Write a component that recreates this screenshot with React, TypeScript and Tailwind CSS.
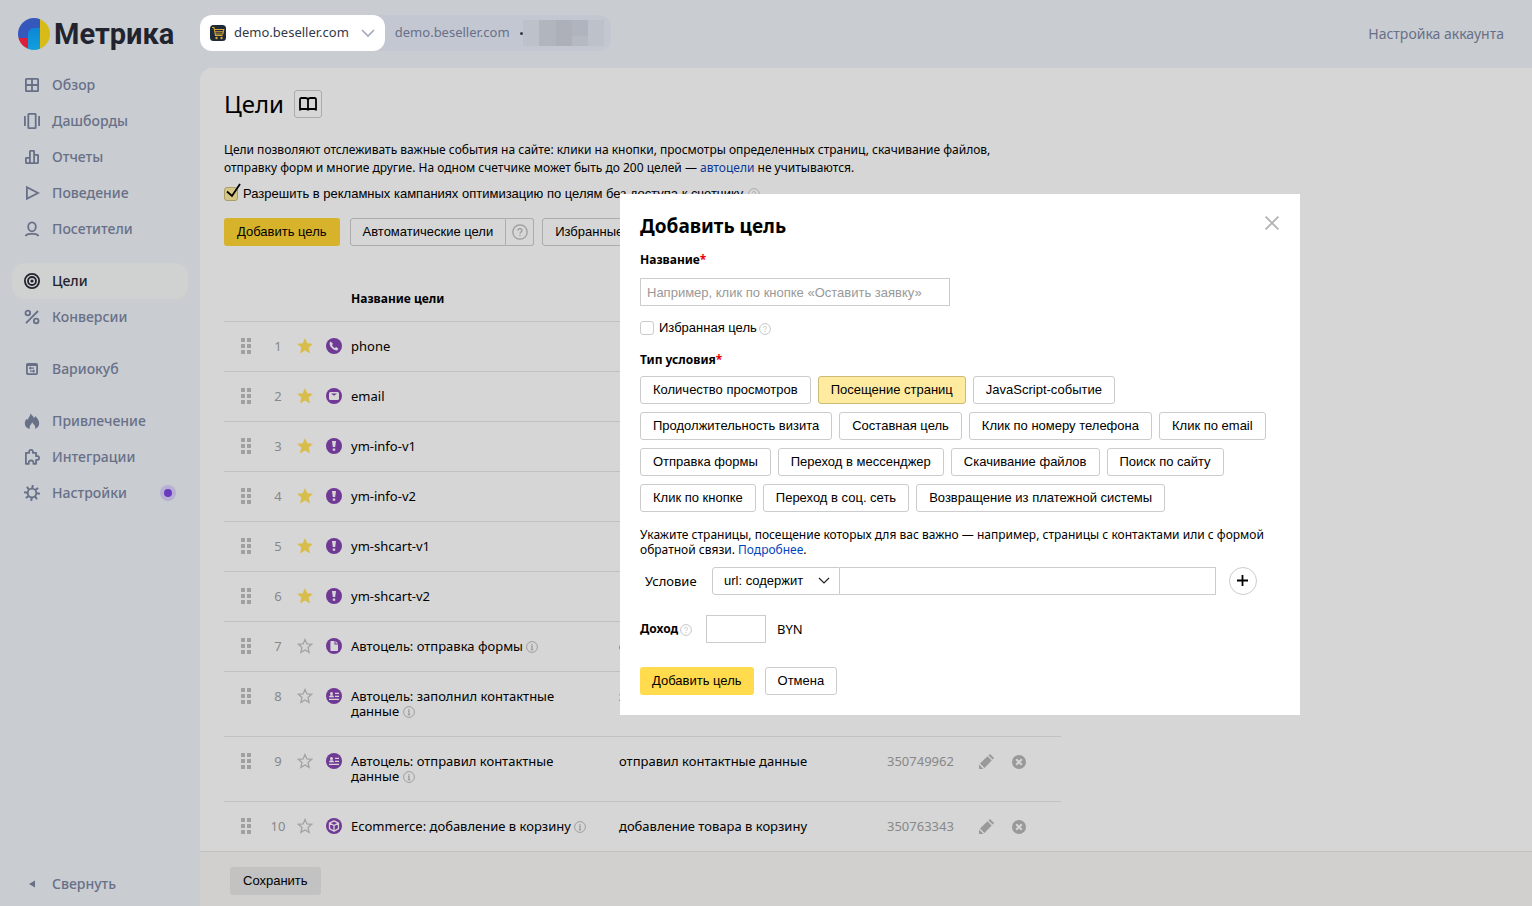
import { useState } from 'react'
import type { ReactNode } from 'react'

type Goal = { id: number; name: string; star: boolean; icon: string; info?: boolean; condition?: string; number?: string }

const GOALS: Goal[] = [
  { id: 1, name: 'phone', star: true, icon: 'phone' },
  { id: 2, name: 'email', star: true, icon: 'mail' },
  { id: 3, name: 'ym-info-v1', star: true, icon: 'event' },
  { id: 4, name: 'ym-info-v2', star: true, icon: 'event' },
  { id: 5, name: 'ym-shcart-v1', star: true, icon: 'event' },
  { id: 6, name: 'ym-shcart-v2', star: true, icon: 'event' },
  { id: 7, name: 'Автоцель: отправка формы', star: false, icon: 'form', info: true, condition: 'отправка формы' },
  { id: 8, name: 'Автоцель: заполнил контактные данные', star: false, icon: 'contact', info: true, condition: 'заполнил контактные данные' },
  { id: 9, name: 'Автоцель: отправил контактные данные', star: false, icon: 'contact', info: true, condition: 'отправил контактные данные', number: '350749962' },
  { id: 10, name: 'Ecommerce: добавление в корзину', star: false, icon: 'cube', info: true, condition: 'добавление товара в корзину', number: '350763343' },
]

const CONDITION_TYPES = [
  'Количество просмотров', 'Посещение страниц', 'JavaScript-событие',
  'Продолжительность визита', 'Составная цель', 'Клик по номеру телефона', 'Клик по email',
  'Отправка формы', 'Переход в мессенджер', 'Скачивание файлов', 'Поиск по сайту',
  'Клик по кнопке', 'Переход в соц. сеть', 'Возвращение из платежной системы',
]

const stroke = { fill: 'none', stroke: 'currentColor', strokeWidth: 1.8 }

const NAV: { label: string; icon: ReactNode; dot?: boolean }[][] = [
  [
    { label: 'Обзор', icon: <path {...stroke} d="M2.500 1.900h11q.6 0 .6.600v11q0 .6-.6.600h-11q-.6 0-.6-.600v-11q0-.6.600-.600zM8 2v12M2 8h12" /> },
    { label: 'Дашборды', icon: <path {...stroke} d="M4.900.900h6.200q.6 0 .6.600v13q0 .6-.6.600H4.900q-.6 0-.6-.600v-13q0-.6.600-.600zM.9 3v10M15.100 3v10" /> },
    { label: 'Отчеты', icon: <path {...stroke} strokeLinejoin="round" d="M5.900 14.100V2.400q0-.5.5-.5h3.200q.5 0 .5.5v11.700M10.100 5.800h3.500q.5 0 .5.5v7.300q0 .5-.5.5H2.400q-.5 0-.5-.5v-4.300q0-.5.5-.5h3.500" /> },
    { label: 'Поведение', icon: <path {...stroke} d="M2.900 2.200v11.600L14 8z" /> },
    { label: 'Посетители', icon: <><ellipse {...stroke} cx="8" cy="5.800" rx="3.800" ry="4.500" /><path {...stroke} d="M1.500 15.200c1-2 2.500-2.300 4.500-2.300h4c2 0 3.500.3 4.500 2.300" /></> },
  ],
  [
    { label: 'Цели', icon: <><circle {...stroke} cx="8" cy="8" r="7.100" /><circle {...stroke} cx="8" cy="8" r="4" /><circle cx="8" cy="8" r="1.600" fill="currentColor" /></> },
    { label: 'Конверсии', icon: <><circle {...stroke} cx="3.800" cy="4" r="2.300" /><circle {...stroke} cx="12.200" cy="12" r="2.300" /><path {...stroke} d="M14 2 2 14.200" /></> },
  ],
  [
    { label: 'Вариокуб', icon: <><rect {...stroke} x="2.900" y="2.900" width="10.200" height="10.200" rx="1" /><path d="M3 3h10v2H3z" fill="currentColor" /><path {...stroke} strokeWidth="1.200" d="M5 7.200h5M6.500 5.800v2.800M11 10.200H6M9.500 8.800v2.800" /></> },
  ],
  [
    { label: 'Привлечение', icon: <path fill="currentColor" d="M6.200 0c.5 1.500 2.500 2.400 3.800 5 .6-.4.900-1 1-2 2.200 1.800 4.200 4.500 4.200 7.300 0 2.700-1.600 4.900-4.200 5.700.5-1.800.3-3.300-1.200-4.600-.7-.6-1.300-1.300-1.400-2.200-.9.900-.9 1.700-1.700 2.600-1.200 1.300-1.300 2.600-.8 4.200C3 15.500.8 13.600.8 10.500c0-1.900.7-3.400 2-4.700.3.600.6.900 1.100 1C4.300 4.300 6.800 3 6.200 0z" /> },
    { label: 'Интеграции', icon: <path {...stroke} strokeLinejoin="round" d="M1.900 3.800h3.300C4.800 1.900 5.500.9 7 .9s2.200 1 1.800 2.900h3.300v3.400c1.900-.4 3 .3 3 1.800s-1.100 2.200-3 1.800v4H9.400c.4-2.200-.5-3.300-2.300-3.300s-2.700 1.100-2.300 3.300H1.900v-4.500z" /> },
    { label: 'Настройки', dot: true, icon: <><circle {...stroke} cx="8" cy="8" r="4.300" /><path {...stroke} strokeWidth="2" d="M8.800.100 8.200 3.500M7.200 15.900l.6-3.400M.1 7.200l3.400.6M15.900 8.800l-3.400-.6M3 1.800l1.900 2.800M13 14.200l-1.900-2.800M1.800 13l2.800-1.900M14.200 3l-2.800 1.900" /></> },
  ],
]

const GOAL_ICONS: Record<string, ReactNode> = {
  phone: <path fill="#d6d6d6" d="M4.700 3.500 3.600 4.900c-.2 3.500 3.700 7.500 7.400 7.500l1.500-1.300-2.200-2-1.500.9C7.700 9.500 6.600 8.400 6.100 7.200l.8-1.400z" />,
  mail: <><rect x="3" y="4" width="10" height="8" rx="1.500" fill="#d6d6d6" /><path d="M5 5.500h6L8 7.800z" fill="#713996" /></>,
  event: <path fill="#d6d6d6" d="M6 3h4l-.8 6H6.800zM6.800 10.500h2.400v2.200H6.800z" />,
  form: <path fill="#d6d6d6" d="M5.200 3h3.300v3.500H12v5.700q0 .8-.8.8h-6q-.8 0-.8-.8V3.800q0-.8.800-.800zM9.500 3 12 5.500H9.500z" />,
  contact: <path fill="#d6d6d6" d="M5.500 4a1.500 1.500 0 1 1 0 3 1.500 1.500 0 0 1 0-3zM3 9.300c0-2.600 5-2.600 5 0zM9 4.800h4v1.300H9zM9 7.800h4v1.300H9zM3 10.800h10v1.300H3z" />,
  cube: <path fill="none" stroke="#d6d6d6" strokeWidth="1.300" strokeLinejoin="round" d="m8 2.800 4.500 2.300v5.500L8 13.200l-4.500-2.600V5.100zM3.500 5.100 8 7.500l4.500-2.400M8 7.500v5.700" />,
}

function GoalIcon({ name }: { name: string }) {
  return (
    <svg width="16" height="16" viewBox="0 0 16 16" className="block">
      <circle cx="8" cy="8" r="8" fill="#713996" />
      {GOAL_ICONS[name]}
    </svg>
  )
}

function Star({ filled }: { filled: boolean }) {
  return (
    <svg width="16" height="16" viewBox="0 0 16 16" className="block">
      <path
        d={filled ? 'M8 0l2.300 5.300 5.700.5-4.300 3.800 1.300 5.900L8 12.400l-5 3.100 1.300-5.900L0 5.800l5.700-.5z' : 'M8 1.500l1.900 4.400 4.700.4L11 9.500l1.100 4.900L8 11.900l-4.100 2.500L5 9.500 1.400 6.300l4.700-.4z'}
        fill={filled ? '#d9bd4c' : 'none'}
        stroke={filled ? 'none' : '#a3a3a3'}
        strokeWidth="1.300"
      />
    </svg>
  )
}

function Mark({ kind, size = 12 }: { kind: 'help' | 'info'; size?: number }) {
  return (
    <svg width={size} height={size} viewBox="0 0 12 12" className="inline-block shrink-0 align-[-2px]" fill="none" stroke="currentColor">
      <circle cx="6" cy="6" r="5.400" strokeWidth=".9" />
      {kind === 'help'
        ? <path strokeWidth=".9" d="M4.500 4.900c0-2 3-2 3 0 0 1-1.500 1.100-1.500 2.200M6 8v1" />
        : <path strokeWidth="1.200" d="M6 3v1.200M5 5.400h1v3M4.800 8.600h2.400" />}
    </svg>
  )
}

function Logo() {
  return (
    <a href="#" className="flex h-[67px] items-center gap-1 pl-[18px] text-[#21242f]">
      <svg width="32" height="32" viewBox="0 0 32 32">
        <defs>
          <clipPath id="logo"><circle cx="16" cy="16" r="16" /></clipPath>
          <linearGradient id="cyan" x1="0" y1="0" x2="0" y2="1">
            <stop offset="0" stopColor="#0c86d6" /><stop offset="1" stopColor="#12a0dc" />
          </linearGradient>
        </defs>
        <g clipPath="url(#logo)">
          <path fill="#3558bd" d="M0 0h22v20H0z" />
          <path fill="#dc1f3c" d="M0 20h10v12H0z" />
          <path fill="url(#cyan)" d="M10 32V17q0-7 7-7h5v22z" />
          <path fill="#d8bb17" d="M22 0h10v32H22z" />
        </g>
      </svg>
      <span className="font-[Roboto,sans-serif] text-[29px] leading-8 font-bold">Метрика</span>
    </a>
  )
}

function Sidebar() {
  return (
    <aside className="flex w-[200px] shrink-0 flex-col text-[14px] font-medium text-[#687088]">
      <Logo />
      <nav className="flex flex-col gap-4 px-3">
        {NAV.map((group, i) => (
          <ul key={i}>
            {group.map(item => (
              <li key={item.label}>
                <a
                  href="#"
                  className={`flex h-9 items-center gap-3 rounded-xl px-3 ${item.label === 'Цели' ? 'bg-[#d0d1d1] text-[#21242f]' : ''}`}
                >
                  <svg width="16" height="16" viewBox="0 0 16 16" className="shrink-0">{item.icon}</svg>
                  <span className="pb-0.5">{item.label}</span>
                  {item.dot && (
                    <span className="ml-auto flex size-4 items-center justify-center rounded-full bg-[#b7b0d2]">
                      <span className="size-2 rounded-full bg-[#683ac0]" />
                    </span>
                  )}
                </a>
              </li>
            ))}
          </ul>
        ))}
      </nav>
      <button className="mx-3 mt-auto mb-1 flex h-9 items-center gap-3 px-3">
        <svg width="16" height="16" viewBox="0 0 16 16"><path d="M11 4.500v7L5 8z" fill="currentColor" /></svg>
        <span className="pb-0.5">Свернуть</span>
      </button>
    </aside>
  )
}

function Header() {
  return (
    <header className="flex h-[68px] shrink-0 items-center justify-between pr-7 pb-0.5 text-[14px] text-[#687088]">
      <div className="flex h-9 items-center rounded-xl bg-[#c3c7d2] text-[13px]">
        <button className="flex h-9 items-center gap-2 rounded-xl bg-white px-2.5 text-[#32394a]">
          <svg width="16" height="16" viewBox="0 0 16 16">
            <rect width="16" height="16" rx="3.500" fill="#1f2a38" />
            <path d="M2 2.500h2l1.500 8h7M4.500 4.500h9.300l-1 4.500H5.300M5 6.700h8" fill="none" stroke="#d9a838" strokeWidth="1.100" />
            <circle cx="6.500" cy="13" r="1.200" fill="#d9a838" />
            <circle cx="11.500" cy="13" r="1.200" fill="#d9a838" />
          </svg>
          <span>demo.beseller.com</span>
          <svg width="14" height="8" viewBox="0 0 14 8" fill="none" stroke="#a3abbd" strokeWidth="1.700" className="ml-1"><path d="m1 1 6 6 6-6" /></svg>
        </button>
        <span className="pl-2.5">demo.beseller.com</span>
        <span className="ml-2.5 size-[3px] rounded-full bg-[#32394a]" />
        <svg width="88" height="26" viewBox="0 0 88 26">
          <path fill="#bdc1ca" d="M0 0h16v26H0zM65 0h16v26H65z" />
          <path fill="#b1b5bd" d="M16 0h17v26H16z" />
          <path fill="#adb0b8" d="M33 0h16v26H33z" />
          <path fill="#afb4be" d="M49 0h16v16H49z" />
          <path fill="#b5b9c2" d="M49 16h16v10H49z" />
        </svg>
      </div>
      <a href="#">Настройка аккаунта</a>
    </header>
  )
}

function GoalsTable() {
  return (
    <table className="mt-[45px] w-full max-w-[837px] table-fixed text-left text-[13px] leading-[15px]">
      <colgroup>
        <col className="w-[44px]" />
        <col className="w-[20px]" />
        <col className="w-[34px]" />
        <col className="w-[29px]" />
        <col className="w-[268px]" />
        <col />
        <col className="w-[92px]" />
        <col className="w-[82px]" />
      </colgroup>
      <thead>
        <tr className="border-b border-[#c1c1c1]">
          <th colSpan={4} />
          <th className="pb-[15px] text-[12px] leading-[15px] font-bold">Название цели</th>
          <th colSpan={3} />
        </tr>
      </thead>
      <tbody>
        {GOALS.map(g => (
          <tr key={g.id} className="border-b border-[#c1c1c1] align-top last:border-b-0">
            <td className="pt-4 pl-[17px]">
              <svg width="10" height="16" viewBox="0 0 10 16" fill="#a0a0a0" className="block"><path d="M0 0h4v4H0zM6 0h4v4H6zM0 6h4v4H0zM6 6h4v4H6zM0 12h4v4H0zM6 12h4v4H6z" /></svg>
            </td>
            <td className="py-[17px] text-center whitespace-nowrap text-[#888]">{g.id}</td>
            <td className="pt-4 pl-[9px]">
              <button className="block" aria-label="Избранное"><Star filled={g.star} /></button>
            </td>
            <td className="pt-4 pl-1"><GoalIcon name={g.icon} /></td>
            <td className="py-[17px] pr-8">
              {g.name}
              {g.info && <span className="text-[#999]"> <Mark kind="info" /></span>}
            </td>
            <td className="py-[17px]">{g.condition}</td>
            <td className="py-[17px] text-[#888]">{g.number}</td>
            <td className="pt-[17px]">
              {g.number && (
                <div className="flex items-center gap-[18px] text-[#999]">
                  <button aria-label="Редактировать">
                    <svg width="15" height="15" viewBox="0 0 15 15" fill="currentColor" className="block"><path d="M0 15v-4.500L4.500 15zM1 9.500l7.500-7.200 4.200 4.200L5.500 14zM9.500 1.400 11 0l4 4-1.400 1.500z" /></svg>
                  </button>
                  <button aria-label="Удалить">
                    <svg width="14" height="14" viewBox="0 0 14 14" className="block"><circle cx="7" cy="7" r="7" fill="currentColor" /><path d="m4.200 4.200 5.600 5.600M9.800 4.200 4.200 9.800" stroke="#d6d6d6" strokeWidth="2" /></svg>
                  </button>
                </div>
              )}
            </td>
          </tr>
        ))}
      </tbody>
    </table>
  )
}

function GoalsPage() {
  const button = 'h-7 border border-[#acacac] px-3 whitespace-nowrap'
  return (
    <main className="flex flex-1 flex-col overflow-hidden rounded-tl-xl bg-[#d6d6d6] text-black">
      <div className="px-6 pt-[22px]">
        <div className="flex h-7 items-center gap-2.5">
          <h1 className="text-[24px] leading-7">Цели</h1>
          <button className="flex size-7 items-center justify-center rounded-[3px] border border-[#acacac]" aria-label="Справка">
            <svg width="18" height="14" viewBox="0 0 18 14" fill="none" stroke="#000" strokeWidth="1.800" strokeLinejoin="round">
              <path d="M9 12.200V2.500Q8.500 1 6.500 1H2.500Q1 1 1 2.500v10.300q.5-.8 2-.8h4q1.500 0 2 .8.500-.8 2-.8h4q1.500 0 2 .8V2.500Q17 1 15.500 1h-4Q9.500 1 9 2.500" />
            </svg>
          </button>
        </div>
        <p className="mt-[23px] text-[12px] leading-[18px]">
          Цели позволяют отслеживать важные события на сайте: клики на кнопки, просмотры определенных страниц, скачивание файлов,<br />
          отправку форм и многие другие. На одном счетчике может быть до 200 целей — <a href="#" className="text-[#0c3796]">автоцели</a> не учитываются.
        </p>
        <label className="mt-2 flex h-[18px] items-center gap-[5px] font-['Liberation_Sans',Arial,sans-serif] text-[13px] whitespace-nowrap">
          <span className="relative size-3.5">
            <input type="checkbox" defaultChecked className="peer block size-3.5 appearance-none rounded-[3px] border border-[#ab9d6b] checked:bg-[#d6c684]" />
            <svg width="18" height="18" viewBox="0 0 18 18" className="pointer-events-none absolute -top-1 left-0 hidden peer-checked:block" fill="none" stroke="#000" strokeWidth="1.800">
              <path d="m3 8.500 5 4.500L16 1" />
            </svg>
          </span>
          Разрешить в рекламных кампаниях оптимизацию по целям без доступа к счетчику
          <span className="text-[#a8a8a8]"><Mark kind="help" /></span>
        </label>
        <div className="mt-[15px] flex font-['Liberation_Sans',Arial,sans-serif] text-[13px]">
          <button className="h-7 rounded-[3px] bg-[#d6b32a] px-[13px]">Добавить цель</button>
          <button className={`${button} ml-2.5 rounded-l-[3px]`}>Автоматические цели</button>
          <button className="flex h-7 w-7 items-center justify-center rounded-r-[3px] border border-l-0 border-[#acacac] text-[#999]" aria-label="Подсказка">
            <Mark kind="help" size={16} />
          </button>
          <button className={`${button} ml-2 rounded-[3px]`}>Избранные</button>
        </div>
        <GoalsTable />
      </div>
      <footer className="mt-auto border-t border-[#c2c1c0] bg-[#d1d0ce] px-[30px] pt-[15px] pb-[11px]">
        <button className="block h-7 rounded-[3px] bg-[#c2c2c2] px-[13px] font-['Liberation_Sans',Arial,sans-serif] text-[13px]">Сохранить</button>
      </footer>
    </main>
  )
}

function AddGoalDialog() {
  const [type, setType] = useState('Посещение страниц')
  return (
    <div role="dialog" aria-labelledby="dialog-title" className="absolute top-[194px] left-[620px] w-[680px] bg-white p-5 text-[13px] leading-4 text-black">
      <div className="flex items-center justify-between">
        <h2 id="dialog-title" className="text-[19px] leading-6 font-bold">Добавить цель</h2>
        <button aria-label="Закрыть">
          <svg width="16" height="14" viewBox="0 0 16 14" className="mb-1.5 block" stroke="#b3b3b3" strokeWidth="1.800"><path d="M1.600.600l12.800 12.800M14.400.600 1.600 13.400" /></svg>
        </button>
      </div>
      <label htmlFor="goal-name" className="mt-3.5 block text-[12px] leading-4 font-bold">Название<span className="text-[#e00]">*</span></label>
      <input
        id="goal-name"
        placeholder="Например, клик по кнопке «Оставить заявку»"
        className="mt-2.5 block h-7 w-[310px] border border-[#ccc] px-1.5 font-['Liberation_Sans',Arial,sans-serif] placeholder:text-[#999]"
      />
      <div className="mt-3 flex h-5 items-center">
        <label className="flex items-center gap-[5px] font-['Liberation_Sans',Arial,sans-serif]">
          <input type="checkbox" className="size-3.5 appearance-none rounded-[3px] border border-[#ccc] checked:bg-[#ffeba0]" />
          Избранная цель
        </label>
        <span className="ml-0.5 flex pt-0.5 text-[#c0c0c0]"><Mark kind="help" /></span>
      </div>
      <h3 className="mt-3.5 text-[12px] leading-4 font-bold">Тип условия<span className="text-[#e00]">*</span></h3>
      <div className="mt-2 flex flex-wrap gap-x-[7px] gap-y-2 font-['Liberation_Sans',Arial,sans-serif]">
        {CONDITION_TYPES.map(t => (
          <button
            key={t}
            onClick={() => setType(t)}
            className={`h-7 rounded-[3px] border px-3 ${t === type ? 'border-[#ccbb76] bg-[#ffeba0]' : 'border-[#ccc] bg-white'}`}
          >
            {t}
          </button>
        ))}
      </div>
      <p className="mt-[15px] text-[12px] leading-[15px]">
        Укажите страницы, посещение которых для вас важно — например, страницы с контактами или с формой<br />
        обратной связи. <a href="#" className="text-[#04b]">Подробнее</a>.
      </p>
      <div className="mt-2.5 flex items-center pl-[5px]">
        <label htmlFor="condition" className="w-[67px]">Условие</label>
        <div className="relative font-['Liberation_Sans',Arial,sans-serif]">
          <select id="condition" className="block h-7 w-[128px] appearance-none rounded-l-[3px] border border-[#ccc] bg-white pl-[11px]">
            <option>url: содержит</option>
          </select>
          <svg width="12" height="8" viewBox="0 0 12 8" fill="none" stroke="#222" strokeWidth="1.200" className="pointer-events-none absolute top-2.5 right-2.5"><path d="m1 1 5 5 5-5" /></svg>
        </div>
        <input aria-label="Значение условия" className="h-7 w-[376px] border border-l-0 border-[#ccc] px-1.5" />
        <button className="ml-[13px] flex size-7 items-center justify-center rounded-full border border-[#ccc]" aria-label="Добавить условие">
          <svg width="12" height="12" viewBox="0 0 12 12" stroke="#000" strokeWidth="1.800"><path d="M5.500 0v11M0 5.500h11" /></svg>
        </button>
      </div>
      <div className="mt-5 flex h-7 items-center">
        <div className="flex w-[66px] items-center">
          <label htmlFor="income" className="text-[12px] leading-4 font-bold">Доход</label>
          <span className="ml-0.5 flex pt-0.5 text-[#c0c0c0]"><Mark kind="help" /></span>
        </div>
        <input id="income" className="h-7 w-[60px] border border-[#ccc] px-1.5" />
        <span className="ml-[11px]">BYN</span>
      </div>
      <div className="mt-6 flex gap-[11px] font-['Liberation_Sans',Arial,sans-serif]">
        <button className="h-7 rounded-[3px] bg-[#ffdb4d] px-3">Добавить цель</button>
        <button className="h-7 rounded-[3px] border border-[#ccc] px-3">Отмена</button>
      </div>
    </div>
  )
}

export default function App() {
  return (
    <div className="relative flex min-h-screen bg-[#c9ccd1] font-['Noto_Sans',sans-serif]">
      <Sidebar />
      <div className="flex min-w-0 flex-1 flex-col">
        <Header />
        <GoalsPage />
      </div>
      <AddGoalDialog />
    </div>
  )
}
